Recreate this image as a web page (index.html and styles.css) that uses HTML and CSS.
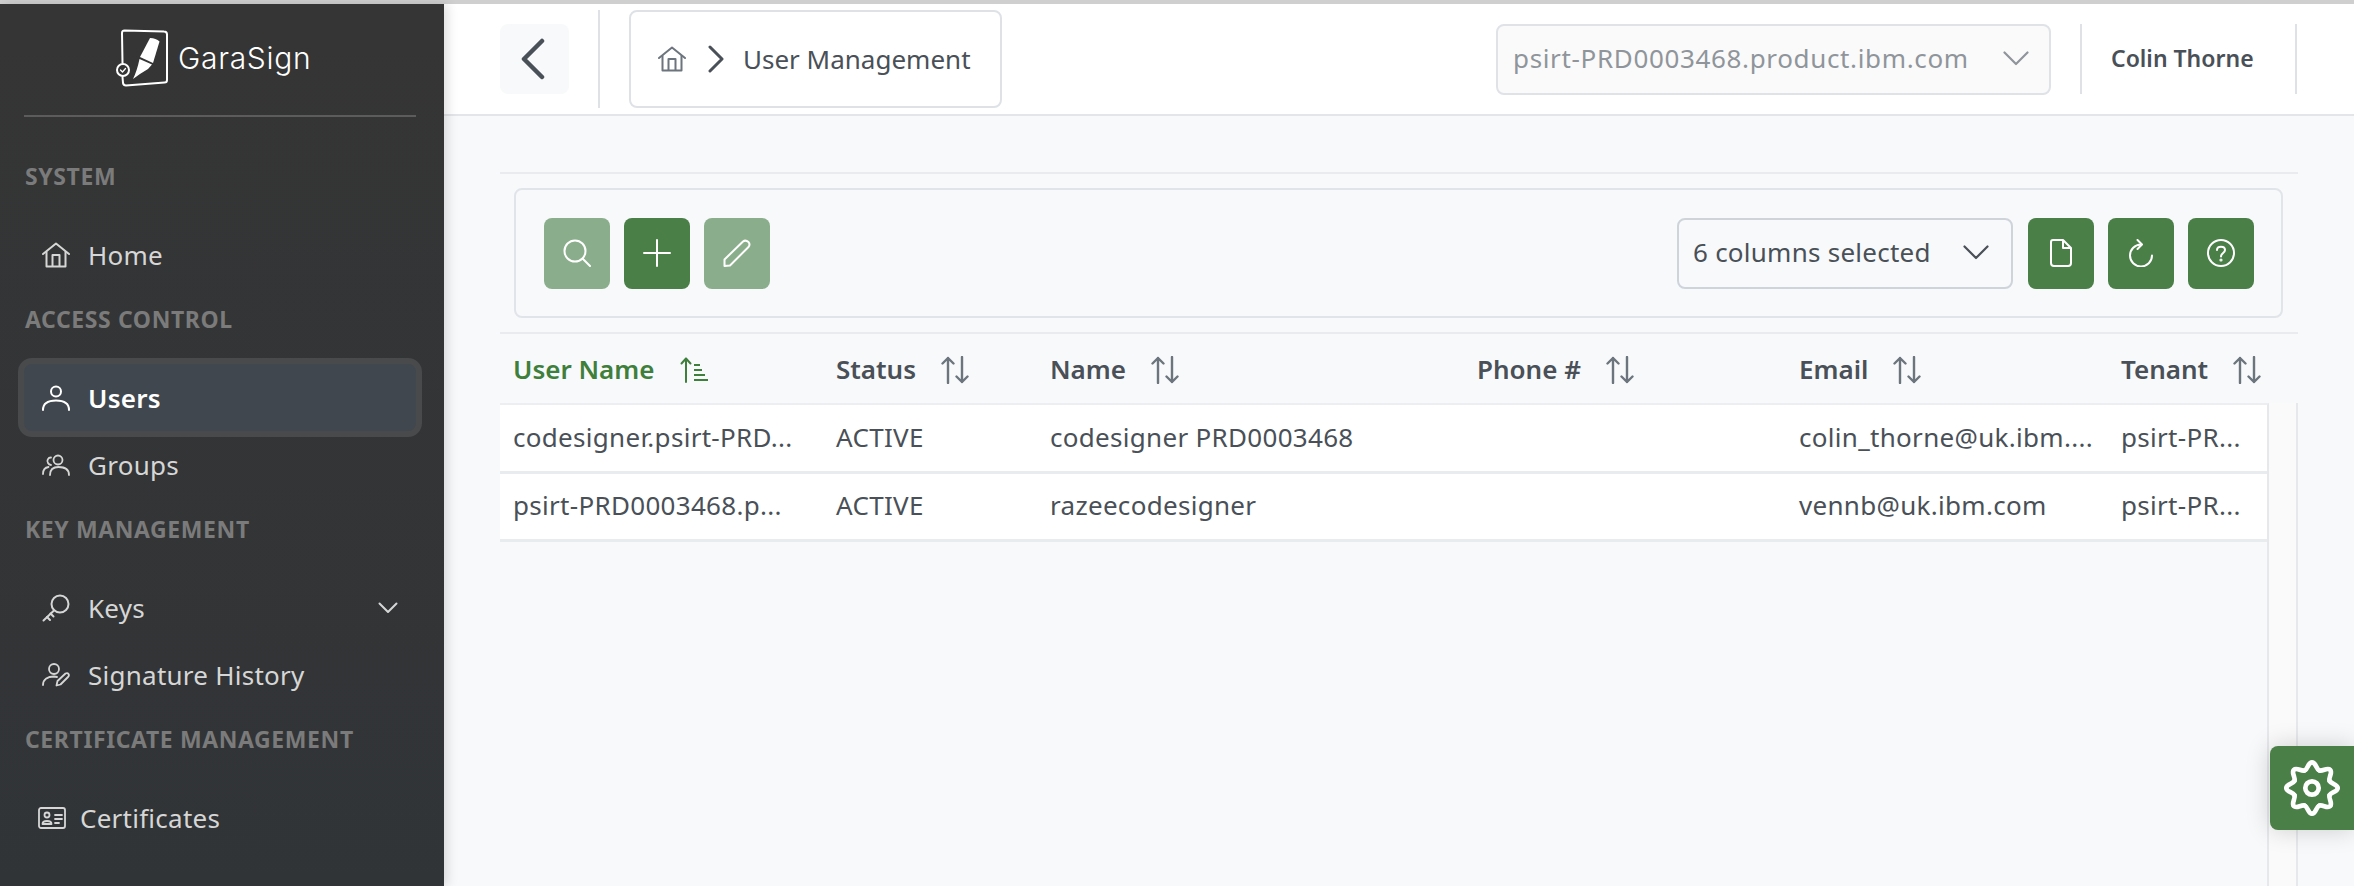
FILE: index.html
```html
<!DOCTYPE html>
<html lang="en">
<head>
<meta charset="utf-8">
<title>User Management</title>
<link rel="stylesheet" href="styles.css">
</head>
<body>
<div class="app">
  <aside class="sidebar">
    <div class="brand">
      <svg class="logo" viewBox="0 0 54 58" fill="none" stroke="#fff" stroke-width="2" stroke-linecap="round" stroke-linejoin="round">
        <path d="M7.500 34 L7 4 Q7 1.500 9.500 1.500 L49 2.500 Q52 2.500 52 5.500 L52 51 Q52 53.500 49.500 53.500 L11 56.500 Q8.500 56.500 8 54 L7.500 48"/>
        <path fill="#fff" stroke="none" d="M35 9 Q41 9 44.500 12.500 L38 34 L25 28 Z"/>
        <path fill="#fff" stroke="none" d="M24.500 30 L37 35.500 L33 40 Q26 44 18 50 Q22 42 24.500 30 Z"/>
        <circle cx="8" cy="41" r="6" fill="#353535"/>
        <path d="M5.500 41 L7.500 43 L10.500 39.500" stroke-width="1.300"/>
      </svg>
      <span class="brand-name">GaraSign</span>
    </div>
    <nav class="nav">
      <div class="nav-title">SYSTEM</div>
      <a class="nav-item">
        <svg class="nav-icon" viewBox="0 0 28 26" fill="none" stroke="currentColor" stroke-width="2" stroke-linecap="round" stroke-linejoin="round"><path d="M1 12 L14 1.500 L27 12"/><path d="M4.500 10 V24.500 H23.500 V10"/><path d="M10.500 24 V13 H17.500 V24"/></svg>
        <span>Home</span>
      </a>
      <div class="nav-title">ACCESS CONTROL</div>
      <a class="nav-item active">
        <svg class="nav-icon" viewBox="0 0 28 26" fill="none" stroke="currentColor" stroke-width="2" stroke-linecap="round"><circle cx="14" cy="6.500" r="5"/><path d="M1 25 C1 18 7 15.500 14 15.500 C21 15.500 27 18 27 25"/></svg>
        <span>Users</span>
      </a>
      <a class="nav-item">
        <svg class="nav-icon" viewBox="0 0 28 22" fill="none" stroke="currentColor" stroke-width="1.800" stroke-linecap="round"><circle cx="16" cy="6" r="4.500"/><path d="M8 21 C8 15 11 13 16.500 13 C22 13 27 15 27 21"/><path d="M9 3.500 A3.500 3.500 0 0 0 6 9 A3.500 3.500 0 0 0 9 11"/><path d="M1 20 C1 16 3 13.500 6.500 13"/></svg>
        <span>Groups</span>
      </a>
      <div class="nav-title">KEY MANAGEMENT</div>
      <a class="nav-item">
        <svg class="nav-icon nav-icon-key" viewBox="0 0 28 28" fill="none" stroke="currentColor" stroke-width="2" stroke-linecap="round" stroke-linejoin="round"><circle cx="18" cy="10" r="8.500"/><path d="M12 16.500 L1.500 26.500"/><path d="M5 23 L8 26 M8.500 19.500 L11.500 22.500"/></svg>
        <span>Keys</span>
        <svg class="nav-caret" viewBox="0 0 20 12" fill="none" stroke="currentColor" stroke-width="2" stroke-linecap="round" stroke-linejoin="round"><path d="M1.500 1.500 L10 10 L18.500 1.500"/></svg>
      </a>
      <a class="nav-item">
        <svg class="nav-icon" viewBox="0 0 28 24" fill="none" stroke="currentColor" stroke-width="1.800" stroke-linecap="round" stroke-linejoin="round"><circle cx="12" cy="6" r="5"/><path d="M1 22 C1 16 6 13.500 12 13.500 L15 14"/><path d="M14.500 22.500 L15.500 18 L23.500 10.500 Q25.500 9.500 26.500 11 Q27.500 12.500 26 14 L18.500 21.500 Z"/></svg>
        <span>Signature History</span>
      </a>
      <div class="nav-title">CERTIFICATE MANAGEMENT</div>
      <a class="nav-item nav-item-cert">
        <svg class="nav-icon" viewBox="0 0 28 22" fill="none" stroke="currentColor" stroke-width="1.800" stroke-linecap="round" stroke-linejoin="round"><rect x="1" y="1" width="26" height="20" rx="2"/><circle cx="9" cy="8" r="2.500"/><path d="M4.500 17 C4.500 13 13.500 13 13.500 17 Z"/><path d="M17 8 H24 M17 12 H24 M17 16 H21"/></svg>
        <span>Certificates</span>
      </a>
    </nav>
  </aside>

  <div class="main">
    <header class="topbar">
      <button class="back" type="button" aria-label="Back">
        <svg class="back-icon" viewBox="0 0 24 42" fill="none" stroke="currentColor" stroke-width="4.500" stroke-linecap="round" stroke-linejoin="round"><path d="M21 3 L3 21 L21 39"/></svg>
      </button>
      <div class="crumb-wrap">
        <div class="crumbs">
          <svg class="crumb-home" viewBox="0 0 28 26" fill="none" stroke="currentColor" stroke-width="2" stroke-linecap="round" stroke-linejoin="round"><path d="M1 12 L14 1.500 L27 12"/><path d="M4.500 10 V24.500 H23.500 V10"/><path d="M10.500 24 V13 H17.500 V24"/></svg>
          <svg class="crumb-sep" viewBox="0 0 16 28" fill="none" stroke="currentColor" stroke-width="3" stroke-linecap="round" stroke-linejoin="round"><path d="M2 2 L14 14 L2 26"/></svg>
          <span>User Management</span>
        </div>
      </div>
      <div class="tenant">
        <span class="tenant-name">psirt-PRD0003468.product.ibm.com</span>
        <svg class="select-caret" viewBox="0 0 26 15" fill="none" stroke="currentColor" stroke-width="2.200" stroke-linecap="round" stroke-linejoin="round"><path d="M1.500 1.500 L13 13 L24.500 1.500"/></svg>
      </div>
      <div class="user">Colin Thorne</div>
    </header>

    <section class="content">
      <div class="toolbar">
        <div class="tools">
          <button class="tool faded" type="button" aria-label="Search">
            <svg class="tool-icon" viewBox="0 0 28 28" fill="none" stroke="currentColor" stroke-width="2" stroke-linecap="round"><circle cx="12" cy="12" r="10.500"/><path d="M20 20 L27 27"/></svg>
          </button>
          <button class="tool" type="button" aria-label="Add">
            <svg class="tool-icon" viewBox="0 0 28 28" fill="none" stroke="currentColor" stroke-width="2" stroke-linecap="round"><path d="M14 1 V27 M1 14 H27"/></svg>
          </button>
          <button class="tool faded" type="button" aria-label="Edit">
            <svg class="tool-icon" viewBox="0 0 28 28" fill="none" stroke="currentColor" stroke-width="2" stroke-linecap="round" stroke-linejoin="round"><path d="M1.500 20.500 L20 2.500 Q22.500 0.500 25.500 3 Q27.500 5.500 25.500 8 L7 26.500 L1.500 27 Z"/></svg>
          </button>
        </div>
        <div class="actions">
          <div class="columns">
            <span>6 columns selected</span>
            <svg class="select-caret" viewBox="0 0 26 15" fill="none" stroke="currentColor" stroke-width="2.200" stroke-linecap="round" stroke-linejoin="round"><path d="M1.500 1.500 L13 13 L24.500 1.500"/></svg>
          </div>
          <button class="tool" type="button" aria-label="Export">
            <svg class="tool-icon" viewBox="0 0 28 28" fill="none" stroke="currentColor" stroke-width="2" stroke-linejoin="round"><path d="M6 1 H16 L24 9 V24 Q24 27 21 27 H7 Q4 27 4 24 V3 Q4 1 6 1 Z"/><path d="M16 1 V9 H24"/></svg>
          </button>
          <button class="tool" type="button" aria-label="Refresh">
            <svg class="tool-icon" viewBox="0 0 28 28" fill="none" stroke="currentColor" stroke-width="2" stroke-linecap="round" stroke-linejoin="round"><path d="M14 5.500 A11 11 0 1 0 25 16.500"/><path d="M10.500 1 L15 5.500 L10.500 10"/></svg>
          </button>
          <button class="tool" type="button" aria-label="Help">
            <svg class="tool-icon" viewBox="0 0 28 28" fill="none" stroke="currentColor" stroke-width="2" stroke-linecap="round"><circle cx="14" cy="14" r="13"/><path d="M10 11 C10 6.500 18 6.500 18 11 C18 14 14 14 14 17.500"/><circle cx="14" cy="21" r="0.600"/></svg>
          </button>
        </div>
      </div>

      <div class="grid">
        <div class="row head">
          <div class="th sorted">User Name
            <svg class="sort-asc" viewBox="0 0 28 26" fill="none" stroke="currentColor" stroke-width="2" stroke-linecap="round" stroke-linejoin="round"><path d="M6 25 V1.500 M1.500 6.500 L6 1.500 L10.500 6.500"/><path d="M14 8 H20 M14 13 H22 M14 18 H25 M14 23 H28" stroke-linecap="butt"/></svg>
          </div>
          <div class="th">Status <svg class="sort" viewBox="0 0 28 28" fill="none" stroke="currentColor" stroke-width="2.400" stroke-linecap="round" stroke-linejoin="round"><path d="M7 27 V2 M1.500 7.500 L7 2 L12.500 7.500"/><path d="M21 1 V26 M15.500 20.500 L21 26 L26.500 20.500"/></svg></div>
          <div class="th">Name <svg class="sort" viewBox="0 0 28 28" fill="none" stroke="currentColor" stroke-width="2.400" stroke-linecap="round" stroke-linejoin="round"><path d="M7 27 V2 M1.500 7.500 L7 2 L12.500 7.500"/><path d="M21 1 V26 M15.500 20.500 L21 26 L26.500 20.500"/></svg></div>
          <div class="th">Phone # <svg class="sort" viewBox="0 0 28 28" fill="none" stroke="currentColor" stroke-width="2.400" stroke-linecap="round" stroke-linejoin="round"><path d="M7 27 V2 M1.500 7.500 L7 2 L12.500 7.500"/><path d="M21 1 V26 M15.500 20.500 L21 26 L26.500 20.500"/></svg></div>
          <div class="th">Email <svg class="sort" viewBox="0 0 28 28" fill="none" stroke="currentColor" stroke-width="2.400" stroke-linecap="round" stroke-linejoin="round"><path d="M7 27 V2 M1.500 7.500 L7 2 L12.500 7.500"/><path d="M21 1 V26 M15.500 20.500 L21 26 L26.500 20.500"/></svg></div>
          <div class="th">Tenant <svg class="sort" viewBox="0 0 28 28" fill="none" stroke="currentColor" stroke-width="2.400" stroke-linecap="round" stroke-linejoin="round"><path d="M7 27 V2 M1.500 7.500 L7 2 L12.500 7.500"/><path d="M21 1 V26 M15.500 20.500 L21 26 L26.500 20.500"/></svg></div>
        </div>
        <div class="grid-body">
          <div class="rows">
            <div class="row data">
              <div class="td">codesigner.psirt-PRD...</div>
              <div class="td">ACTIVE</div>
              <div class="td">codesigner PRD0003468</div>
              <div class="td"></div>
              <div class="td">colin_thorne@uk.ibm....</div>
              <div class="td">psirt-PR...</div>
            </div>
            <div class="row data">
              <div class="td">psirt-PRD0003468.p...</div>
              <div class="td">ACTIVE</div>
              <div class="td">razeecodesigner</div>
              <div class="td"></div>
              <div class="td">vennb@uk.ibm.com</div>
              <div class="td">psirt-PR...</div>
            </div>
          </div>
          <div class="rail"></div>
        </div>
      </div>
    </section>
  </div>

  <button class="settings" type="button" aria-label="Settings">
    <svg class="gear" viewBox="-30 -30 60 60" fill="none" stroke="#fff" stroke-width="4.700" stroke-linecap="round" stroke-linejoin="round">
      <defs><path id="lobe" d="M-7.270 -17.550 C-4.040 -18.890 -4 -25.700 0 -25.700 C4 -25.700 4.040 -18.890 7.270 -17.550"/></defs>
      <use href="#lobe"/><use href="#lobe" transform="rotate(45)"/><use href="#lobe" transform="rotate(90)"/><use href="#lobe" transform="rotate(135)"/><use href="#lobe" transform="rotate(180)"/><use href="#lobe" transform="rotate(225)"/><use href="#lobe" transform="rotate(270)"/><use href="#lobe" transform="rotate(315)"/>
      <circle r="6.700"/>
    </svg>
  </button>
</div>
</body>
</html>
```
FILE: styles.css
```css
* { box-sizing: border-box; }
html, body { margin: 0; height: 100%; }
body {
  font-family: "Noto Sans", "Lato", sans-serif;
  font-size: 26px;
  color: #495057;
  background: #f8f9fb;
  overflow: hidden;
}
.app {
  position: relative;
  display: flex;
  height: 886px;
  border-top: 4px solid #cfcfcf;
}

/* Sidebar */
.sidebar {
  flex: 0 0 444px;
  background: linear-gradient(#353535, #313437);
  box-shadow: 4px 0 10px rgba(0, 0, 0, 0.12);
  position: relative;
  z-index: 1;
}
.brand {
  display: flex;
  align-items: center;
  gap: 9px;
  height: 113px;
  margin: 0 28px 0 24px;
  padding: 0 0 3px 91px;
  border-bottom: 2px solid #5c5c5c;
}
.logo { width: 54px; height: 58px; flex: none; }
.brand-name { font-family: "Inter", sans-serif; font-size: 30px; font-weight: 300; color: #fff; letter-spacing: 0.7px; }
.nav { padding: 28px 22px 0 18px; }
.nav-title {
  height: 59px;
  line-height: 59px;
  margin-bottom: 17px;
  padding: 2px 0 0 7px;
  font-size: 23px;
  font-weight: 700;
  letter-spacing: 0.6px;
  color: #7b7b7b;
  white-space: nowrap;
}
.nav-item {
  display: flex;
  align-items: center;
  height: 67px;
  padding-left: 24px;
  color: #d6d6d6;
  letter-spacing: 0.25px;
}
.nav-item.active {
  height: 79px;
  margin: -6px 0;
  background: #40474e;
  border: 6px solid #484a4c;
  border-radius: 14px;
  padding-left: 18px;
  color: #fff;
  font-weight: 600;
}
.nav-item-cert { padding-left: 20px; }
.nav-item-cert span { margin-left: -4px; }
.nav-icon { width: 28px; height: 26px; margin-right: 18px; flex: none; }
.nav-icon-key { height: 28px; }
.nav-caret { width: 20px; height: 12px; margin-left: auto; margin-right: 24px; }

/* Top bar */
.main { flex: 1; display: flex; flex-direction: column; min-width: 0; }
.topbar {
  flex: 0 0 112px;
  display: flex;
  align-items: center;
  background: #fff;
  border-bottom: 2px solid #e3e5e8;
  padding: 0 57px 0 56px;
}
.back {
  width: 69px;
  height: 70px;
  border: 0;
  border-radius: 8px;
  background: #f8f9fa;
  color: #495057;
  display: flex;
  align-items: center;
  justify-content: center;
  padding: 0 4px 0 0;
  margin-right: 29px;
}
.back-icon { width: 24px; height: 42px; }
.crumb-wrap {
  height: 98px;
  padding-left: 29px;
  border-left: 2px solid #dee2e6;
}
.crumbs {
  width: 373px;
  height: 98px;
  display: flex;
  align-items: center;
  padding-left: 27px;
  border: 2px solid #dee2e6;
  border-radius: 8px;
}
.crumb-home { width: 28px; height: 26px; color: #6c757d; margin-right: 22px; }
.crumb-sep { width: 16px; height: 28px; margin-right: 19px; }
.tenant {
  margin-left: auto;
  width: 555px;
  height: 71px;
  display: flex;
  align-items: center;
  justify-content: space-between;
  padding: 0 20px 2px 15px;
  background: #fafafa;
  border: 2px solid #dfe2e6;
  border-radius: 8px;
  color: #8f959b;
  letter-spacing: 0.65px;
}
.select-caret { width: 26px; height: 15px; flex: none; }
.user {
  margin-left: 29px;
  width: 217px;
  height: 70px;
  display: flex;
  align-items: center;
  padding: 0 0 2px 29px;
  border-left: 2px solid #dee2e6;
  border-right: 2px solid #dee2e6;
  font-size: 23px;
  font-weight: 600;
}

/* Toolbar */
.content {
  flex: 1;
  display: flex;
  flex-direction: column;
  margin: 56px 56px 0 56px;
  border-top: 2px solid #e9ebee;
  min-height: 0;
}
.toolbar {
  flex: 0 0 130px;
  margin: 14px 0 14px 14px;
  width: 1769px;
  display: flex;
  align-items: center;
  justify-content: space-between;
  padding: 0 27px 0 28px;
  border: 2px solid #e1e4e8;
  border-radius: 8px;
}
.tools, .actions { display: flex; align-items: center; gap: 14px; }
.tool {
  width: 66px;
  height: 71px;
  border: 0;
  border-radius: 8px;
  padding: 0;
  background: #4a7f47;
  color: #fff;
  display: flex;
  align-items: center;
  justify-content: center;
}
.tool.faded { background: #8aae8b; }
.tool-icon { width: 28px; height: 28px; }
.columns {
  width: 336px;
  height: 71px;
  display: flex;
  align-items: center;
  justify-content: space-between;
  padding: 0 22px 2px 14px;
  border: 2px solid #ced4da;
  border-radius: 8px;
  margin-right: 1px;
  letter-spacing: 0.25px;
}

/* Grid */
.grid { flex: 1; display: flex; flex-direction: column; min-height: 0; border-top: 2px solid #e9ebee; }
.row { display: grid; grid-template-columns: 323px 214px 427px 322px 322px 161px; }
.head { flex: 0 0 69px; }
.th {
  display: flex;
  align-items: center;
  gap: 25px;
  padding-left: 13px;
  font-weight: 600;
  white-space: nowrap;
}
.sorted { color: #3f7f3c; }
.sort { width: 28px; height: 28px; color: #6c757d; flex: none; margin-top: 2px; }
.sort-asc { width: 28px; height: 26px; flex: none; margin-top: 2px; }
.grid-body { flex: 1; display: flex; min-height: 0; }
.rows { width: 1769px; border-right: 2px solid #e6e8eb; border-top: 2px solid #eceef1; }
.rail { width: 29px; background: #fafafa; border-right: 2px solid #e6e8eb; }
.data { height: 68.500px; background: #fff; border-bottom: 3px solid #e9ecef; }
.td { align-self: center; padding: 0 0 2px 13px; white-space: nowrap; letter-spacing: 0.3px; }

/* Floating settings tab */
.settings {
  position: absolute;
  top: 742px;
  right: 0;
  width: 84px;
  height: 84px;
  padding: 0;
  border: 0;
  border-radius: 8px 0 0 8px;
  background: #4a7f47;
  box-shadow: 0 0 24px rgba(0, 0, 0, 0.18);
  display: flex;
  align-items: center;
  justify-content: center;
}
.gear { width: 60px; height: 60px; }
```
